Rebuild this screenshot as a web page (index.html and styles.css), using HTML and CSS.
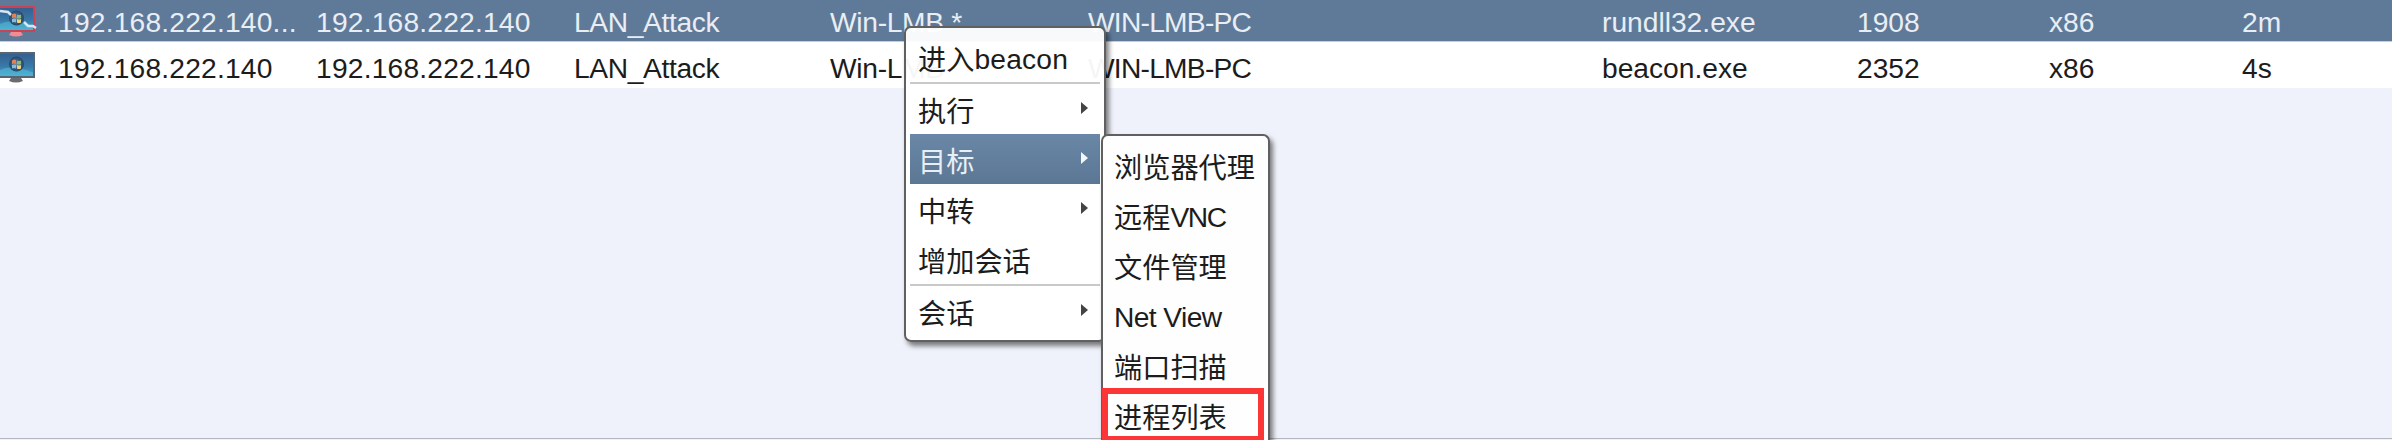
FILE: index.html
```html
<!DOCTYPE html>
<html lang="zh-CN">
<head>
<meta charset="utf-8">
<title>Sessions</title>
<link rel="stylesheet" href="styles.css">
</head>
<body>
<svg class="defs" width="0" height="0">
  <defs>
    <linearGradient id="screen" x1="0" y1="0" x2="0" y2="1">
      <stop offset="0" stop-color="#355e8e"/>
      <stop offset=".55" stop-color="#3879a8"/>
      <stop offset="1" stop-color="#45acd0"/>
    </linearGradient>
    <radialGradient id="orb">
      <stop offset="0" stop-color="#6d8ba0"/>
      <stop offset=".6" stop-color="#3c5d7c"/>
      <stop offset="1" stop-color="#234669"/>
    </radialGradient>
    <g id="desktop">
      <path d="M0 1H34V25H0Z" fill="url(#screen)"/>
      <path d="M0 18Q12 12 34 21V25H0Z" fill="#58bfd9" opacity=".5"/>
      <circle cx="16.500" cy="12" r="7.500" fill="url(#orb)"/>
      <path d="M12 8.500Q14 7 16 8V12Q14 11 12 12Z" fill="#e08355"/>
      <path d="M17 8.500Q19 9.500 21 8.500V12Q19 13 17 12Z" fill="#91b969"/>
      <path d="M12 13Q14 12 16 13V16.500Q14 15.500 12 16.500Z" fill="#87bbdb"/>
      <path d="M17 13Q19 14 21 13V16.500Q19 17.500 17 16.500Z" fill="#edd481"/>
    </g>
  </defs>
</svg>
<main class="sessions">
  <div class="row selected">
    <svg class="host" viewBox="0 0 37 32">
      <use href="#desktop"/>
      <path d="M0 1H34V25H0" fill="none" stroke="#c94354" stroke-width="2"/>
      <path d="M11 26H21L23 29Q16 32 9 29Z" fill="#f28b92"/>
      <path d="M0 5L8 6L11 9M24 16L28 20L33 20L36 22" fill="none" stroke="#d5e7f5" stroke-width="2.500"/>
    </svg>
    <span class="ip">192.168.222.140...</span><span class="ip">192.168.222.140</span><span class="listener">LAN_Attack</span><span class="user">Win-LMB *</span><span class="computer">WIN-LMB-PC</span><span class="process">rundll32.exe</span><span class="pid">1908</span><span class="arch">x86</span><span>2m</span>
  </div>
  <div class="row">
    <svg class="host" viewBox="0 0 37 32">
      <use href="#desktop"/>
      <path d="M0 1H34V25H0" fill="none" stroke="#566573" stroke-width="2"/>
      <path d="M11 26H21L23 29Q16 32 9 29Z" fill="#696d72"/>
    </svg>
    <span class="ip">192.168.222.140</span><span class="ip">192.168.222.140</span><span class="listener">LAN_Attack</span><span class="user">Win-LMB</span><span class="computer">WIN-LMB-PC</span><span class="process">beacon.exe</span><span class="pid">2352</span><span class="arch">x86</span><span>4s</span>
  </div>
</main>
<nav class="menu context">
  <div class="item">进入<span class="latin wide">beacon</span></div>
  <div class="separator"></div>
  <div class="item parent">执行</div>
  <div class="item parent active">目标</div>
  <div class="item parent">中转</div>
  <div class="item">增加会话</div>
  <div class="separator"></div>
  <div class="item parent">会话</div>
</nav>
<nav class="menu submenu">
  <div class="item">浏览器代理</div>
  <div class="item">远程<span class="latin tight">VNC</span></div>
  <div class="item">文件管理</div>
  <div class="item"><span class="latin">Net View</span></div>
  <div class="item">端口扫描</div>
  <div class="item marked">进程列表</div>
</nav>
</body>
</html>
```
FILE: styles.css
```css
*, *::before { box-sizing: border-box; }

body {
  margin: 0;
  height: 440px;
  position: relative;
  overflow: hidden;
  background: #eff2fb;
  color: #1c1c1c;
  font: 28.2px/32px "Liberation Sans", "Noto Sans CJK SC", sans-serif;
}

.defs { position: absolute; }

.sessions {
  height: 439px;
  border-bottom: 1px solid #b4b7bf;
}

.row {
  height: 46px;
  display: grid;
  grid-template-columns: 58px 258px 258px 256px 258px 514px 255px 192px 193px 150px;
  align-items: start;
  padding-top: 10px;
  background: #fff;
  white-space: pre;
}

.row.selected {
  height: 42px;
  padding-top: 6px;
  background: #5f7a99;
  border-bottom: 1px solid #c3cedb;
  color: #e9eef4;
}

.ip { letter-spacing: .2px; }
.listener { letter-spacing: -.35px; }
.user { letter-spacing: -.3px; }
.computer { letter-spacing: -.75px; }

.host {
  width: 37px;
  height: 32px;
  filter: blur(.5px);
}

.menu {
  position: absolute;
  padding: 4px;
  border: 2px solid #606060;
  border-radius: 7px;
  background: rgba(255, 255, 255, .955);
  box-shadow: 3px 4px 5px rgba(0, 0, 0, .5);
}

.context {
  left: 904px;
  top: 26px;
  width: 202px;
  height: 316px;
}

.submenu {
  left: 1101px;
  top: 134px;
  width: 169px;
  height: 306px;
  padding: 4px 4px 0 0;
  border-bottom: 0;
  border-radius: 7px 7px 0 0;
  background: #fefefe;
}

.item {
  height: 50px;
  padding: 12px 8px 6px;
  display: flex;
  align-items: center;
  white-space: nowrap;
}

.submenu .item { padding-left: 11px; }

.latin {
  margin-bottom: 3px;
  letter-spacing: -.6px;
}

.wide { letter-spacing: .2px; }
.tight { letter-spacing: -1.4px; }

.parent::after {
  content: "";
  border-left: 7px solid #444;
  border-top: 6px solid transparent;
  border-bottom: 6px solid transparent;
  margin: 0 4px 8px auto;
}

.active {
  background: linear-gradient(#6a87a7, #5b7794);
  color: #e9eef4;
}

.active::after { border-left-color: #f4f6f8; }

.separator {
  height: 2px;
  background: #c9c9c9;
}

.marked { position: relative; }

.marked::before {
  content: "";
  position: absolute;
  left: -1px;
  top: -2px;
  width: 162px;
  height: 52px;
  border: 6px solid #fc3637;
  border-bottom-width: 4px;
}
```
